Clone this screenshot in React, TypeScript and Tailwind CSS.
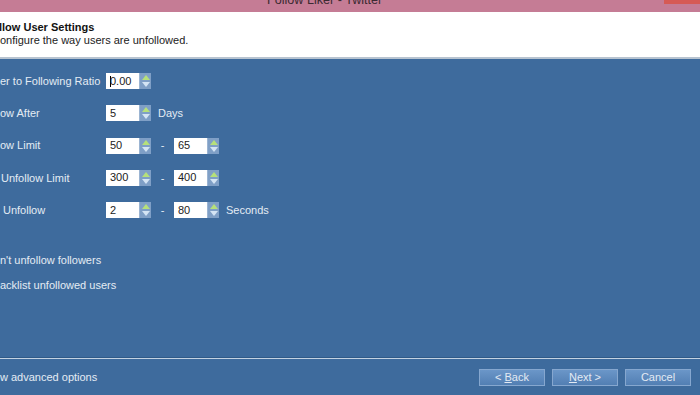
import React from 'react';

function Spinner() {
  return (
    <div className="w-[12px] h-[16px] bg-[#7f9fc6] flex flex-col items-center justify-center gap-[2px] border-l border-[#9bb4d2]">
      <svg width="8" height="5" viewBox="0 0 8 5">
        <path d="M0 5 L4 0 L8 5 Z" fill="#b6e07a" />
      </svg>
      <svg width="8" height="5" viewBox="0 0 8 5">
        <path d="M0 0 L8 0 L4 5 Z" fill="#d4e4f4" />
      </svg>
    </div>
  );
}

function NumberBox({ value, caret }: { value: string; caret?: boolean }) {
  return (
    <div className="flex items-center">
      <div className="w-[33px] h-[16px] bg-white flex items-center pl-[4px] text-[#222] text-[11px] leading-none">
        {caret && <span className="w-px h-[11px] bg-black mr-[-1px]" />}
        {value}
      </div>
      <Spinner />
    </div>
  );
}

interface RowProps {
  label: string;
  from: string;
  to?: string;
  unit?: string;
  caret?: boolean;
  indent?: string;
}

function SettingRow({ label, from, to, unit, caret, indent }: RowProps) {
  return (
    <div className="flex items-center h-[16px]">
      <div className={`w-[106px] text-[#e4ebf4] ${indent ?? ''}`}>{label}</div>
      <NumberBox value={from} caret={caret} />
      {to !== undefined && (
        <>
          <div className="w-[23px] text-center text-[#e4ebf4]">-</div>
          <NumberBox value={to} />
        </>
      )}
      {unit && <div className="ml-[7px] text-[#e4ebf4]">{unit}</div>}
    </div>
  );
}

function WizButton({ children }: { children: React.ReactNode }) {
  return (
    <button className="w-[66px] h-[17px] border border-[#86a7cf] bg-gradient-to-b from-[#6b96c8] to-[#527fb3] text-[#e3eaf3] text-[11px] leading-none flex items-center justify-center">
      {children}
    </button>
  );
}

export default function App() {
  return (
    <div className="w-[700px] h-[395px] overflow-hidden flex flex-col font-['Liberation_Sans',Arial,sans-serif] text-[11px]">
      {/* Title bar */}
      <div className="h-[12px] bg-[#c57c95] flex overflow-hidden shrink-0">
        <div className="ml-[267px] mt-[-6px] text-[12.6px] leading-none text-[#3b2a31] whitespace-nowrap">
          Follow Liker - Twitter
        </div>
        <div className="ml-auto w-[36px] h-[4px] bg-[#d65a55]" />
      </div>

      {/* Header */}
      <div className="h-[45px] bg-white flex flex-col pt-[9px] shrink-0">
        <div className="font-bold text-[#111] leading-[13px] ml-[-1px]">llow User Settings</div>
        <div className="text-[#222] leading-[13px]">onfigure the way users are unfollowed.</div>
      </div>
      <div className="h-[2px] bg-[#b7c3d0] shrink-0" />

      {/* Body */}
      <div className="flex-1 bg-[#3e6b9d] flex flex-col">
        <div className="flex-1 flex flex-col pt-[14px]">
          <div className="flex flex-col gap-[16.25px]">
            <SettingRow label="er to Following Ratio" from="0.00" caret />
            <SettingRow label="ow After" from="5" unit="Days" />
            <SettingRow label="ow Limit" from="50" to="65" />
            <SettingRow label="Unfollow Limit" from="300" to="400" indent="pl-[1px]" />
            <SettingRow label="Unfollow" from="2" to="80" unit="Seconds" indent="pl-[3px]" />
          </div>
          <div className="mt-[36px] text-[#e4ebf4] leading-[13px]">n't unfollow followers</div>
          <div className="mt-[12px] text-[#e4ebf4] leading-[13px]">acklist unfollowed users</div>
        </div>
        <div className="h-px bg-[#2f5a88]" />
        <div className="h-px bg-[#c3d2e2]" />
        <div className="h-[36px] flex items-start pt-[10px]">
          <div className="text-[#e4ebf4] leading-[17px]">w advanced options</div>
          <div className="ml-auto mr-[9px] flex gap-[7px]">
            <WizButton>
              &lt; <span className="underline ml-[3px]">B</span>ack
            </WizButton>
            <WizButton>
              <span className="underline">N</span>ext &gt;
            </WizButton>
            <WizButton>Cancel</WizButton>
          </div>
        </div>
      </div>
    </div>
  );
}
